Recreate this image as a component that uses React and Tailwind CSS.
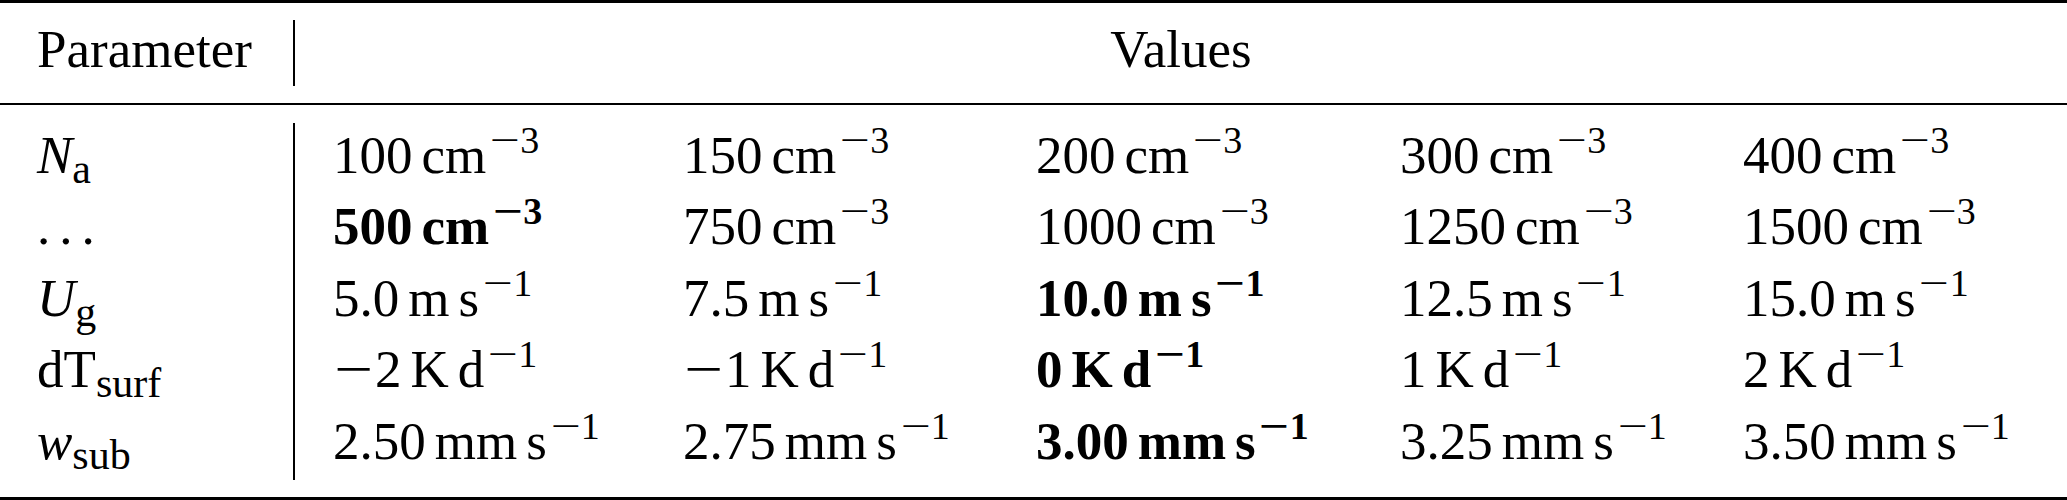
import React from 'react';

// exponent is always negative in this table: minus + digit
const Sup = ({ exp }) => (
  <span className="ml-[3px] align-[20px] leading-[0] text-[38px]">
    <span className="inline-block w-[31px] text-center">
      <span className="inline-block scale-x-[1.4]">−</span>
    </span>
    {exp}
  </span>
);

const Sub = ({ children }) => (
  <span className="not-italic align-[-10px] leading-[0] text-[42px]">{children}</span>
);

const Value = ({ v, bold }) => {
  const [num, units, exp] = v;
  const neg = num.startsWith('-');
  return (
    <span className={bold ? 'font-bold' : ''}>
      {neg && (
        <span className="inline-block w-[42px] text-center">
          <span className="inline-block scale-x-[1.3]">−</span>
        </span>
      )}
      {neg ? num.slice(1) : num}
      {units.map((u, i) => (
        <span key={i} className="ml-[9px]">{u}</span>
      ))}
      <Sup exp={exp} />
    </span>
  );
};

const rows = [
  {
    label: <><i>N</i><Sub>a</Sub></>,
    bold: -1,
    vals: [
      ['100', ['cm'], '3'],
      ['150', ['cm'], '3'],
      ['200', ['cm'], '3'],
      ['300', ['cm'], '3'],
      ['400', ['cm'], '3'],
    ],
  },
  {
    label: <span className="tracking-[9px]">...</span>,
    bold: 0,
    vals: [
      ['500', ['cm'], '3'],
      ['750', ['cm'], '3'],
      ['1000', ['cm'], '3'],
      ['1250', ['cm'], '3'],
      ['1500', ['cm'], '3'],
    ],
  },
  {
    label: <><i>U</i><Sub>g</Sub></>,
    bold: 2,
    vals: [
      ['5.0', ['m', 's'], '1'],
      ['7.5', ['m', 's'], '1'],
      ['10.0', ['m', 's'], '1'],
      ['12.5', ['m', 's'], '1'],
      ['15.0', ['m', 's'], '1'],
    ],
  },
  {
    label: <>dT<Sub>surf</Sub></>,
    bold: 2,
    vals: [
      ['-2', ['K', 'd'], '1'],
      ['-1', ['K', 'd'], '1'],
      ['0', ['K', 'd'], '1'],
      ['1', ['K', 'd'], '1'],
      ['2', ['K', 'd'], '1'],
    ],
  },
  {
    label: <><i>w</i><Sub>sub</Sub></>,
    bold: 2,
    vals: [
      ['2.50', ['mm', 's'], '1'],
      ['2.75', ['mm', 's'], '1'],
      ['3.00', ['mm', 's'], '1'],
      ['3.25', ['mm', 's'], '1'],
      ['3.50', ['mm', 's'], '1'],
    ],
  },
];

export default function App() {
  return (
    <div className="w-[2067px] h-[500px] bg-white text-black font-['Liberation_Serif',serif] text-[53px] leading-[58px] whitespace-nowrap">
      <div className="h-[3px] bg-black" />
      <div className="h-[17px]" />
      {/* header */}
      <div className="flex h-[66px]">
        <div className="w-[295px] pl-[37px] border-r-2 border-black">Parameter</div>
        <div className="flex-1 text-center">Values</div>
      </div>
      <div className="h-[17px]" />
      <div className="h-[2px] bg-black" />
      <div className="h-[18px]" />
      {/* body */}
      <div className="flex">
        <div className="w-[295px] pl-[37px] border-r-2 border-black">
          {rows.map((r, i) => (
            <div key={i} className="h-[71.4px] pt-[3px]">{r.label}</div>
          ))}
        </div>
        <div className="flex-1 pl-[38px]">
          {rows.map((r, i) => (
            <div key={i} className="grid grid-cols-[350px_353px_364px_343px_1fr] h-[71.4px] pt-[3px]">
              {r.vals.map((v, j) => (
                <div key={j}>
                  <Value v={v} bold={j === r.bold} />
                </div>
              ))}
            </div>
          ))}
        </div>
      </div>
      <div className="h-[17px]" />
      <div className="h-[3px] bg-black" />
    </div>
  );
}
